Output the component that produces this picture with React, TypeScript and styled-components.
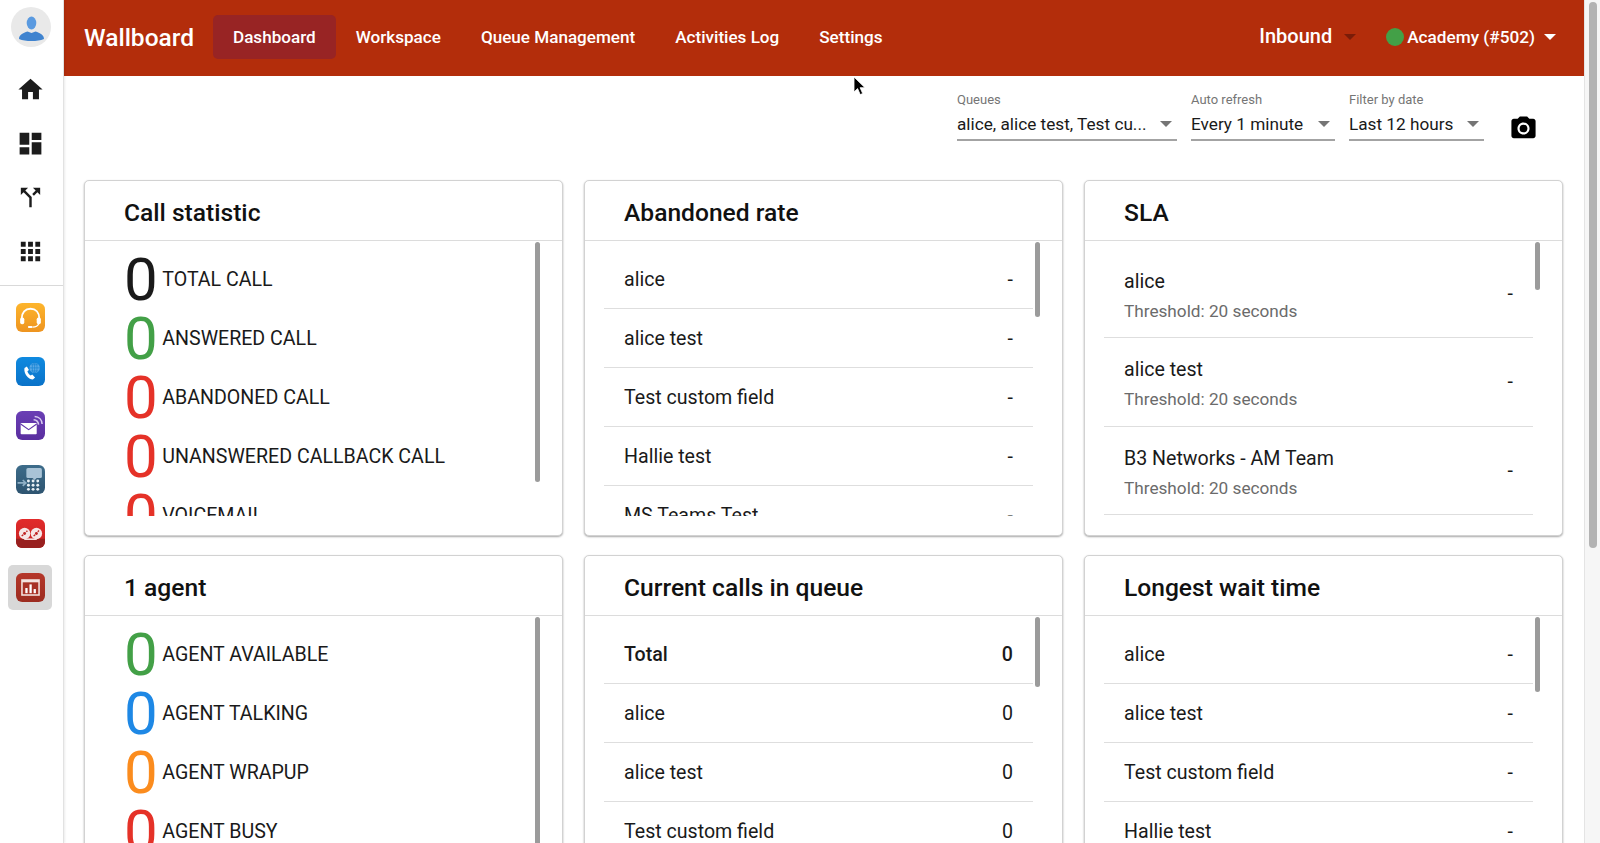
import React from 'react';
import styled, { createGlobalStyle } from 'styled-components';

const GlobalStyle = createGlobalStyle`
  html, body {
    margin: 0;
    height: 100%;
    overflow: hidden;
    background: #fff;
    font-family: Roboto, "Liberation Sans", sans-serif;
    color: #111;
  }
  #root { height: 100%; }
`;

const Shell = styled.div`
  display: flex;
  height: 843px;
  overflow: hidden;
  position: relative;
`;

const Sidebar = styled.aside`
  flex: 0 0 64px;
  box-sizing: border-box;
  border-right: 1px solid #e2e2e2;
  box-shadow: 1px 0 2px rgba(0, 0, 0, 0.08);
  padding-top: 7px;
  display: flex;
  flex-direction: column;
  align-items: stretch;
  z-index: 1;
  background: #fff;
`;

const Avatar = styled.div`
  width: 40px;
  height: 40px;
  margin: 0 0 15px 11px;
`;

const NavIcon = styled.div`
  height: 54px;
  display: flex;
  align-items: center;
  justify-content: center;
  padding-right: 3px;
  svg { width: 29px; height: 29px; fill: #1c1c1c; display: block; }
`;

const SideDivider = styled.hr`
  border: 0;
  border-top: 1px solid #d9d9d9;
  margin: 7px 0 4px;
`;

const AppSlot = styled.div<{ $active?: boolean }>`
  height: 54px;
  display: flex;
  align-items: center;
  justify-content: center;
  padding-right: 3px;
  position: relative;
  z-index: 0;
  &::before {
    content: '';
    display: ${({ $active }) => ($active ? 'block' : 'none')};
    position: absolute;
    left: 8px;
    top: 5px;
    width: 44px;
    height: 45px;
    background: #d8d8d8;
    border-radius: 5px;
    z-index: -1;
  }
  svg { width: 29px; height: 29px; display: block; }
`;

const Main = styled.div`
  flex: 1;
  min-width: 0;
  display: flex;
  flex-direction: column;
`;

const TopBar = styled.header`
  flex: 0 0 76px;
  box-sizing: border-box;
  background: #b32d0b;
  display: flex;
  align-items: center;
  padding: 0 28px 2px 20px;
  color: #fff;
`;

const Brand = styled.div`
  font-size: 24.5px;
  font-weight: 500;
  margin-right: 19px;
  line-height: 30px;
  padding-top: 2px;
`;

const NavItem = styled.div<{ $active?: boolean }>`
  font-size: 17.1px;
  font-weight: 500;
  height: 44px;
  line-height: 44px;
  padding: 0 20px;
  border-radius: 5px;
  background: ${({ $active }) => ($active ? '#982424' : 'transparent')};
`;

const TopRight = styled.div`
  margin-left: auto;
  display: flex;
  align-items: center;
`;

const Direction = styled.div`
  font-size: 20px;
  font-weight: 500;
  margin-right: 12px;
  line-height: 30px;
  padding-bottom: 3px;
`;

const Caret = styled.span<{ $color: string }>`
  display: inline-block;
  width: 0;
  height: 0;
  border-left: 6px solid transparent;
  border-right: 6px solid transparent;
  border-top: 6px solid ${({ $color }) => $color};
`;

const StatusDot = styled.span`
  width: 18px;
  height: 18px;
  border-radius: 50%;
  background: #43a047;
  margin-left: 30px;
  margin-right: 3px;
`;

const Account = styled.div`
  font-size: 17.2px;
  font-weight: 500;
  margin-right: 9px;
`;

const Toolbar = styled.div`
  flex: 0 0 104px;
  box-sizing: border-box;
  display: flex;
  justify-content: flex-end;
  padding: 16px 46.5px 0 0;
`;

const Select = styled.div<{ $width: number }>`
  width: ${({ $width }) => $width}px;
  margin-right: 14px;
`;

const SelectLabel = styled.div`
  font-size: 13px;
  color: #757575;
  line-height: 16px;
`;

const SelectValue = styled.div`
  height: 33px;
  box-sizing: border-box;
  border-bottom: 2px solid #a3a3a3;
  display: flex;
  align-items: center;
  justify-content: space-between;
  font-size: 17.2px;
  padding-right: 5px;
  color: #1a1a1a;
`;

const CameraButton = styled.div`
  margin: 22px 0 0 10.5px;
  svg { width: 29px; height: 29px; display: block; fill: #000; }
`;

const Board = styled.div`
  display: grid;
  grid-template-columns: repeat(3, 479px);
  grid-auto-rows: 356px;
  gap: 19px 21px;
  padding-left: 20px;
`;

const Card = styled.section`
  box-sizing: border-box;
  border: 1px solid #d2d2d2;
  border-radius: 5px;
  box-shadow: 0 1px 2px rgba(0, 0, 0, 0.35);
  display: flex;
  flex-direction: column;
  background: #fff;
`;

const CardTitle = styled.h2`
  margin: 0;
  flex: 0 0 57px;
  box-sizing: border-box;
  border-bottom: 1px solid #dcdcdc;
  padding: 4px 0 0 39px;
  font-size: 24.6px;
  font-weight: 500;
  line-height: 55px;
  color: #111;
`;

const CardBody = styled.div`
  position: relative;
  flex: 1;
  padding-bottom: 20px;
  min-height: 0;
`;

const Scroller = styled.div`
  height: 275px;
  overflow: hidden;
  padding-top: 9px;
  box-sizing: border-box;
`;

const Thumb = styled.div`
  position: absolute;
  top: 1px;
  right: 22px;
  width: 5px;
  border-radius: 3px;
  background: #9b9b9b;
`;

const StatRow = styled.div`
  height: 59px;
  display: flex;
  align-items: center;
  padding-left: 39px;
`;

const StatNumber = styled.span<{ $color: string }>`
  font-size: 60px;
  font-weight: 400;
  line-height: 59px;
  color: ${({ $color }) => $color};
  margin-right: 4.5px;
`;

const StatLabel = styled.span`
  font-size: 19.6px;
  color: #1a1a1a;
`;

const ListRow = styled.div<{ $bold?: boolean; $tall?: boolean }>`
  box-sizing: border-box;
  height: ${({ $tall }) => ($tall ? 88.3 : 59)}px;
  margin: 0 29px 0 19px;
  padding: 0 20px;
  border-bottom: 1px solid #dedede;
  display: flex;
  align-items: center;
  justify-content: space-between;
  font-size: 19.6px;
  font-weight: ${({ $bold }) => ($bold ? 500 : 400)};
  color: #1a1a1a;
`;

const RowText = styled.div`
  display: flex;
  flex-direction: column;
  padding-top: 5px;
`;

const RowPrimary = styled.span`
  line-height: 30px;
`;

const RowSecondary = styled.span`
  font-size: 17.2px;
  line-height: 28px;
  color: #6b6b6b;
`;

const Pointer = styled.svg`
  position: absolute;
  left: 853px;
  top: 76px;
  width: 13px;
  height: 20px;
`;

const PageTrack = styled.div`
  flex: 0 0 16px;
  box-sizing: border-box;
  border-left: 1px solid #e4e4e4;
  background: #f6f6f6;
  padding: 2px 3px 0 4px;
`;

const PageThumb = styled.div`
  height: 546px;
  border-radius: 4px;
  background: #b3b3b3;
`;

const Person = () => (
  <svg viewBox="0 0 40 40" width="40" height="40">
    <circle cx="20" cy="20" r="20" fill="#e9e9e9" />
    <ellipse cx="20.5" cy="16" rx="4.800" ry="6.500" fill="#5a9ae0" />
    <path d="M8 32c0-4 4-6 8.500-7.500l4 1.500 4-1.500C29 26 33 28 33 32c-3.500 1.500-7.500 2-12.500 2S11.500 33.500 8 32z" fill="#3f83cf" />
  </svg>
);

const Tile: React.FC<{ id: string; from: string; to: string; children: React.ReactNode }> = ({ id, from, to, children }) => (
  <svg viewBox="0 0 28 28">
    <defs>
      <linearGradient id={id} x1="0" y1="0" x2="0" y2="1">
        <stop offset="0" stopColor={from} />
        <stop offset="1" stopColor={to} />
      </linearGradient>
    </defs>
    <rect width="28" height="28" rx="6" fill={`url(#${id})`} />
    {children}
  </svg>
);

const HeadsetTile = () => (
  <Tile id="tileA" from="#fdb52c" to="#ee9420">
    <path d="M5.500 15c0-6 3.500-9.500 8.500-9.500s8.500 3.500 8.500 9.500" fill="none" stroke="#fff" strokeWidth="1.800" />
    <rect x="4" y="14" width="4" height="6.500" rx="1.800" fill="#fff" />
    <rect x="20" y="14" width="4" height="6.500" rx="1.800" fill="#fff" />
    <path d="M22 20c-1 2.500-3.500 3.200-6 3.200" fill="none" stroke="#fff" strokeWidth="1.200" />
    <rect x="11.500" y="22.300" width="4.500" height="1.800" rx="0.900" fill="#fff" />
  </Tile>
);

const PhoneTile = () => (
  <Tile id="tileB" from="#0f8ae0" to="#0a72c8">
    <path d="M8.200 10.500l2.300-1.400 2 3.400-1.500 1.200c.5 1.700 1.700 3.300 3.200 4.200l1.500-1.100 2.700 2.900-1.800 1.900c-4.600.3-9.500-6-8.400-11.100z" fill="#fff" />
    <circle cx="18" cy="10.500" r="5" fill="#5aa9e6" />
    <path d="M13 10.500h10M18 5.500v10M14.500 7.500h7M14.500 13.500h7" stroke="#0e7fd4" strokeWidth="0.600" fill="none" />
    <ellipse cx="18" cy="10.500" rx="2.300" ry="5" stroke="#0e7fd4" strokeWidth="0.600" fill="none" />
  </Tile>
);

const MailTile = () => (
  <Tile id="tileC" from="#6a3fb5" to="#5a2e9f">
    <rect x="4.500" y="11.500" width="15.500" height="11" rx="0.800" fill="#fff" />
    <path d="M4.500 12.500l7.750 5.500 7.750-5.500" fill="none" stroke="#6236aa" strokeWidth="1.100" />
    <path d="M17 8.500c2.800.2 4.500 2 4.800 4.700M18 5.300c4.300.2 7 3.200 7.200 7.200" fill="none" stroke="#d9cdf0" strokeWidth="1.500" />
  </Tile>
);

const TerminalTile = () => (
  <Tile id="tileD" from="#3d6c8a" to="#2e5470">
    <rect x="10" y="3" width="15" height="9.500" rx="1.500" fill="#a9c3d6" />
    <path d="M16 12.500h4l-2 2z" fill="#a9c3d6" />
    <path d="M1.500 17.300h7.500M6.500 14.500l3 2.800-3 2.800" fill="none" stroke="#8fb0c6" strokeWidth="1.600" />
    {[12, 16.5, 21].map(x =>
      [15.5, 19.5, 23.5].map(y => <circle key={`${x}-${y}`} cx={x} cy={y} r="1.400" fill="#e8f0f5" />)
    )}
  </Tile>
);

const TapeTile = () => (
  <Tile id="tileE" from="#e22b2b" to="#c42222">
    <path d="M0 19h28v3a6 6 0 0 1-6 6H6a6 6 0 0 1-6-6z" fill="#98201f" />
    <path d="M8 19.500h12" stroke="#f6dddd" strokeWidth="1.600" />
    <circle cx="8.300" cy="14" r="5.500" fill="#f6e6e6" />
    <circle cx="19.700" cy="14" r="5.500" fill="#f6e6e6" />
    <circle cx="8.300" cy="14" r="1.400" fill="#c02424" />
    <circle cx="19.700" cy="14" r="1.400" fill="#c02424" />
    <path d="M5.500 16.500l1.500-1.400M10 12.300l1-1M17 16.500l1.500-1.400M21 12.300l1.200-1.100" stroke="#c02424" strokeWidth="1.300" />
  </Tile>
);

const ChartTile = () => (
  <Tile id="tileF" from="#b5372a" to="#9c2c20">
    <rect x="5" y="6" width="18" height="16" fill="#f3e4e0" />
    <rect x="6.500" y="9" width="15" height="11.500" fill="#a83226" />
    <rect x="9" y="14.500" width="2.200" height="5" fill="#fff" />
    <rect x="13" y="11" width="2.200" height="8.500" fill="#fff" />
    <rect x="17" y="15.500" width="2.200" height="4" fill="#fff" />
  </Tile>
);

const navIcons = [
  'M10 20v-6h4v6h5v-8h3L12 3 2 12h3v8z',
  'M3 13h8V3H3v10zm0 8h8v-6H3v6zm10 0h8V11h-8v10zm0-18v6h8V3h-8z',
  'M14 4l2.290 2.290-2.880 2.880 1.420 1.420 2.880-2.880L20 10V4zm-4 0H4v6l2.290-2.290 4.710 4.700V20h2v-8.410l-5.290-5.300z',
  'M4 8h4V4H4v4zm6 12h4v-4h-4v4zm-6 0h4v-4H4v4zm0-6h4v-4H4v4zm6 0h4v-4h-4v4zm6-10v4h4V4h-4zm-6 4h4V4h-4v4zm6 6h4v-4h-4v4zm0 6h4v-4h-4v4z',
];

const apps = [HeadsetTile, PhoneTile, MailTile, TerminalTile, TapeTile, ChartTile];

const callStats = [
  { label: 'TOTAL CALL', color: '#1a1a1a' },
  { label: 'ANSWERED CALL', color: '#43a047' },
  { label: 'ABANDONED CALL', color: '#e53228' },
  { label: 'UNANSWERED CALLBACK CALL', color: '#e53228' },
  { label: 'VOICEMAIL', color: '#e53228' },
];

const agentStats = [
  { label: 'AGENT AVAILABLE', color: '#43a047' },
  { label: 'AGENT TALKING', color: '#1e88e5' },
  { label: 'AGENT WRAPUP', color: '#fb8c1e' },
  { label: 'AGENT BUSY', color: '#e53228' },
];

const queueNames = ['alice', 'alice test', 'Test custom field', 'Hallie test', 'MS Teams Test'];

const StatList: React.FC<{ items: { label: string; color: string }[] }> = ({ items }) => (
  <Scroller>
    {items.map(item => (
      <StatRow key={item.label}>
        <StatNumber $color={item.color}>0</StatNumber>
        <StatLabel>{item.label}</StatLabel>
      </StatRow>
    ))}
  </Scroller>
);

const ValueList: React.FC<{ rows: { name: string; value: string; bold?: boolean }[] }> = ({ rows }) => (
  <Scroller>
    {rows.map(row => (
      <ListRow key={row.name} $bold={row.bold}>
        <span>{row.name}</span>
        <span>{row.value}</span>
      </ListRow>
    ))}
  </Scroller>
);

export default function App() {
  return (
    <Shell>
      <GlobalStyle />
      <Sidebar>
        <Avatar><Person /></Avatar>
        {navIcons.map(d => (
          <NavIcon key={d}>
            <svg viewBox="0 0 24 24"><path d={d} /></svg>
          </NavIcon>
        ))}
        <SideDivider />
        {apps.map((Icon, i) => (
          <AppSlot key={i} $active={i === apps.length - 1}>
            <Icon />
          </AppSlot>
        ))}
      </Sidebar>
      <Main>
        <TopBar>
          <Brand>Wallboard</Brand>
          <NavItem $active>Dashboard</NavItem>
          <NavItem>Workspace</NavItem>
          <NavItem>Queue Management</NavItem>
          <NavItem>Activities Log</NavItem>
          <NavItem>Settings</NavItem>
          <TopRight>
            <Direction>Inbound</Direction>
            <Caret $color="#7a1c08" />
            <StatusDot />
            <Account>Academy (#502)</Account>
            <Caret $color="#fff" />
          </TopRight>
        </TopBar>
        <Toolbar>
          <Select $width={220}>
            <SelectLabel>Queues</SelectLabel>
            <SelectValue>alice, alice test, Test cu...<Caret $color="#757575" /></SelectValue>
          </Select>
          <Select $width={144}>
            <SelectLabel>Auto refresh</SelectLabel>
            <SelectValue>Every 1 minute<Caret $color="#757575" /></SelectValue>
          </Select>
          <Select $width={135}>
            <SelectLabel>Filter by date</SelectLabel>
            <SelectValue>Last 12 hours<Caret $color="#757575" /></SelectValue>
          </Select>
          <CameraButton>
            <svg viewBox="0 0 24 24">
              <circle cx="12" cy="12" r="3.200" />
              <path d="M9 2L7.170 4H4c-1.100 0-2 .9-2 2v12c0 1.100.9 2 2 2h16c1.100 0 2-.9 2-2V6c0-1.100-.9-2-2-2h-3.170L15 2H9zm3 15c-2.760 0-5-2.240-5-5s2.240-5 5-5 5 2.240 5 5-2.240 5-5 5z" />
            </svg>
          </CameraButton>
        </Toolbar>
        <Board>
          <Card>
            <CardTitle>Call statistic</CardTitle>
            <CardBody>
              <StatList items={callStats} />
              <Thumb style={{ height: 240 }} />
            </CardBody>
          </Card>
          <Card>
            <CardTitle>Abandoned rate</CardTitle>
            <CardBody>
              <ValueList rows={queueNames.map(name => ({ name, value: '-' }))} />
              <Thumb style={{ height: 75 }} />
            </CardBody>
          </Card>
          <Card>
            <CardTitle>SLA</CardTitle>
            <CardBody>
              <Scroller>
                {['alice', 'alice test', 'B3 Networks - AM Team'].map(name => (
                  <ListRow key={name} $tall>
                    <RowText>
                      <RowPrimary>{name}</RowPrimary>
                      <RowSecondary>Threshold: 20 seconds</RowSecondary>
                    </RowText>
                    <span>-</span>
                  </ListRow>
                ))}
              </Scroller>
              <Thumb style={{ height: 48 }} />
            </CardBody>
          </Card>
          <Card>
            <CardTitle>1 agent</CardTitle>
            <CardBody>
              <StatList items={agentStats} />
              <Thumb style={{ height: 240 }} />
            </CardBody>
          </Card>
          <Card>
            <CardTitle>Current calls in queue</CardTitle>
            <CardBody>
              <ValueList
                rows={[
                  { name: 'Total', value: '0', bold: true },
                  ...queueNames.slice(0, 3).map(name => ({ name, value: '0' })),
                ]}
              />
              <Thumb style={{ height: 70 }} />
            </CardBody>
          </Card>
          <Card>
            <CardTitle>Longest wait time</CardTitle>
            <CardBody>
              <ValueList rows={queueNames.slice(0, 4).map(name => ({ name, value: '-' }))} />
              <Thumb style={{ height: 75 }} />
            </CardBody>
          </Card>
        </Board>
      </Main>
      <PageTrack>
        <PageThumb />
      </PageTrack>
      <Pointer viewBox="0 0 13 20">
        <path d="M1 1v15l3.600-3.400 2.600 6 2.500-1.100-2.600-5.800H12z" fill="#000" stroke="#fff" strokeWidth="0.800" />
      </Pointer>
    </Shell>
  );
}
